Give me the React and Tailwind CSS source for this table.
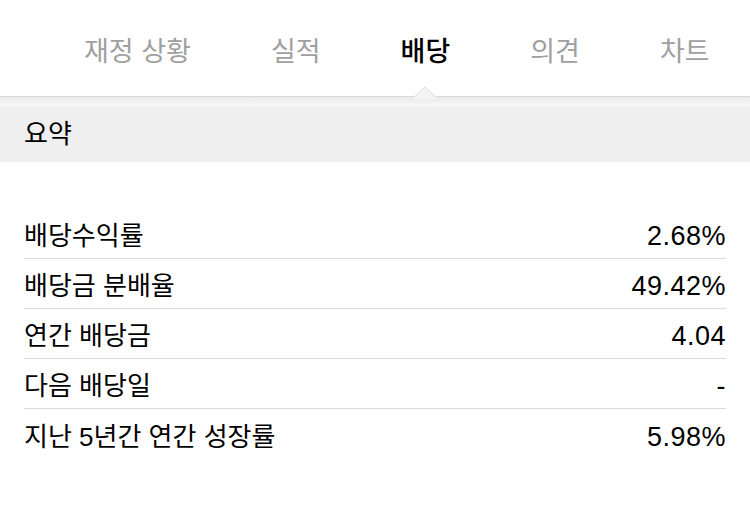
import React from "react";

const FONT = {
  fontFamily: '"Liberation Sans", "Noto Sans CJK KR", sans-serif',
};

const tabs = [
  { label: "재정 상황" },
  { label: "실적" },
  { label: "배당", active: true },
  { label: "의견" },
  { label: "차트" },
];

const rows = [
  { label: "배당수익률", value: "2.68%" },
  { label: "배당금 분배율", value: "49.42%" },
  { label: "연간 배당금", value: "4.04" },
  { label: "다음 배당일", value: "-" },
  { label: "지난 5년간 연간 성장률", value: "5.98%" },
];

export default function App() {
  return (
    <div className="w-[750px] h-[506px] bg-white overflow-hidden" style={FONT}>
      {/* Tab bar */}
      <div className="relative h-[97px] border-b border-[#d9d9d9]">
        <div className="flex items-center h-full pl-[84px] gap-[80px] pt-[8px]">
          {tabs.map((t) => (
            <span
              key={t.label}
              className={
                t.active
                  ? "text-[27px] font-medium text-black whitespace-nowrap"
                  : "text-[27px] text-[#a0a0a0] whitespace-nowrap"
              }
            >
              {t.label}
            </span>
          ))}
        </div>
        {/* notch under the active tab */}
        <svg
          className="absolute left-[413px] top-[86px]"
          width="24"
          height="13"
          viewBox="0 0 24 13"
        >
          <polygon points="0,12 12,1 24,12" fill="#f4f4f4" stroke="#dcdcdc" strokeWidth="1" />
          <rect x="0" y="11" width="24" height="2" fill="#f4f4f4" />
        </svg>
      </div>
      <div className="h-[9px] bg-gradient-to-b from-[#e9e9e9] to-[#f9f9f9]" />

      {/* Section header */}
      <div className="h-[56px] bg-[#efefef] flex items-center px-[24px]">
        <span className="text-[26px] text-black">요약</span>
      </div>

      {/* Rows */}
      <div className="mt-[47px] px-[24px]">
        {rows.map((r, i) => (
          <div
            key={r.label}
            className={
              i < rows.length - 1
                ? "flex items-center justify-between h-[50px] pt-[6px] border-b border-[#dadada]"
                : "flex items-center justify-between h-[50px] pt-[6px]"
            }
          >
            <span className="text-[26px] text-black">{r.label}</span>
            <span className="text-[27px] text-black tracking-[0.5px]">{r.value}</span>
          </div>
        ))}
      </div>
    </div>
  );
}
